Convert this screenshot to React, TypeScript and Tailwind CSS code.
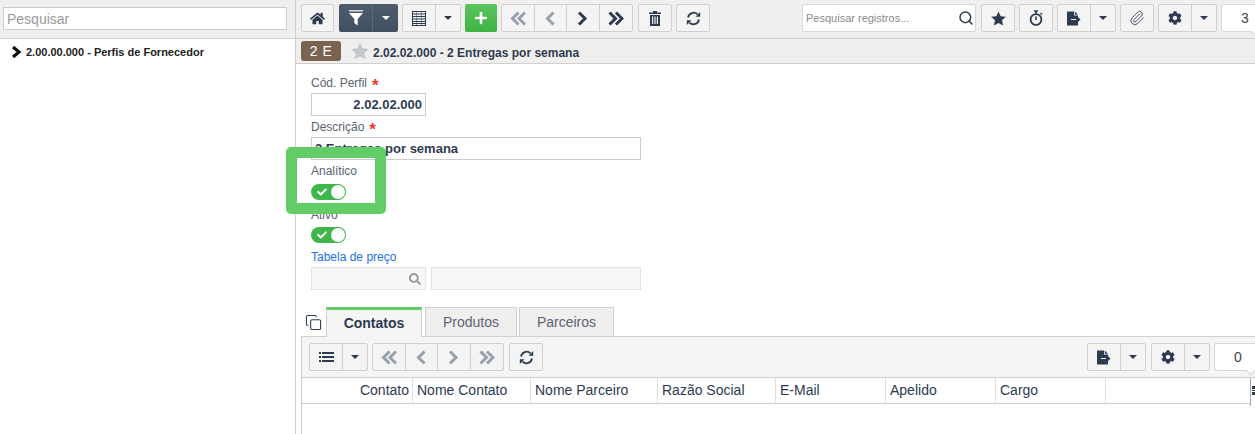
import { Copy, Paperclip, Search } from 'lucide-react';
import { FaCheck, FaCog, FaHome, FaPlus, FaSearch } from 'react-icons/fa';

const DARK = 'text-[#2d3b50]';

function Caret({ light = false }: { light?: boolean }) {
  return (
    <span
      className={`block w-0 h-0 border-x-[4px] border-x-transparent border-t-[4px] ${light ? 'border-t-white' : 'border-t-[#2d3b50]'}`}
    />
  );
}

function Chevron({ dir, double = false, muted = false }: { dir: 'left' | 'right'; double?: boolean; muted?: boolean }) {
  const color = muted ? '#98a1ab' : '#2d3b50';
  if (double) {
    const first = dir === 'left' ? 'M8.5 1.5 L2.5 7.5 L8.5 13.5' : 'M1.5 1.5 L7.5 7.5 L1.5 13.5';
    const second = dir === 'left' ? 'M15 1.5 L9 7.5 L15 13.5' : 'M8 1.5 L14 7.5 L8 13.5';
    return (
      <svg width="16" height="15" viewBox="0 0 16 15" fill="none" stroke={color} strokeWidth="3">
        <path d={first} />
        <path d={second} />
      </svg>
    );
  }
  const single = dir === 'left' ? 'M9.5 1.5 L3.5 7.5 L9.5 13.5' : 'M2 1.5 L8 7.5 L2 13.5';
  return (
    <svg width="12" height="15" viewBox="0 0 12 15" fill="none" stroke={color} strokeWidth="3">
      <path d={single} />
    </svg>
  );
}

function TableIcon() {
  return (
    <svg width="14" height="15" viewBox="0 0 14 15" fill="none">
      <path d="M4.5 1v13M9.5 1v13" stroke="#9aa3af" strokeWidth="1" />
      <rect x="0.5" y="0.5" width="13" height="14" stroke="#2d3b50" />
      <path d="M1 3h12M1 5.5h12M1 8h12M1 10.5h12M1 12.5h12" stroke="#2d3b50" strokeWidth="1" />
    </svg>
  );
}

function ListIcon() {
  return (
    <svg width="15" height="12" viewBox="0 0 15 12" fill="#2d3b50">
      <rect x="0" y="1" width="2" height="2" />
      <rect x="3" y="1" width="12" height="2" />
      <rect x="0" y="5" width="2" height="2" />
      <rect x="3" y="5" width="12" height="2" />
      <rect x="0" y="9" width="2" height="2" />
      <rect x="3" y="9" width="12" height="2" />
    </svg>
  );
}

function FilterIcon() {
  return (
    <svg width="16" height="16" viewBox="0 0 16 16" fill="#fff">
      <rect x="1" y="0" width="14" height="1.5" opacity="0.8" />
      <path d="M1 3h14L9.7 9v6.5L6.3 13V9z" />
    </svg>
  );
}

function TrashIcon() {
  return (
    <svg width="12" height="15" viewBox="0 0 12 15" fill="#2d3b50">
      <path d="M4 0h4v1.5h4V3H0V1.5h4z" />
      <path d="M1 4h10v11H1zM3 5.5V13h1.2V5.5zM5.4 5.5V13h1.2V5.5zM7.8 5.5V13H9V5.5z" fillRule="evenodd" />
    </svg>
  );
}

function RefreshIcon() {
  return (
    <svg width="15" height="15" viewBox="0 0 15 15" fill="#2d3b50">
      <path d="M2 6.5A5.6 5.6 0 0 1 11.5 3.4" fill="none" stroke="#2d3b50" strokeWidth="1.8" />
      <path d="M13 8.5A5.6 5.6 0 0 1 3.5 11.6" fill="none" stroke="#2d3b50" strokeWidth="1.8" />
      <path d="M9.5 5.7h4.7V1z" />
      <path d="M5.5 9.3H0.8V14z" />
    </svg>
  );
}

function StarIcon({ size = 15, color = '#2d3b50' }: { size?: number; color?: string }) {
  return (
    <svg width={size} height={size} viewBox="0 0 16 16" fill={color}>
      <path d="M8 0.5l2.3 5.1 5.5 0.6-4.1 3.7 1.2 5.5L8 12.7l-4.9 2.7 1.2-5.5L0.2 6.2l5.5-0.6z" />
    </svg>
  );
}

function StopwatchIcon() {
  return (
    <svg width="15" height="16" viewBox="0 0 15 16" fill="none" stroke="#2d3b50">
      <circle cx="7" cy="9.5" r="5.4" strokeWidth="1.8" />
      <path d="M5 1h4M7 1v3" strokeWidth="1.6" />
      <path d="M7 6.5v3.5" strokeWidth="1.6" />
      <path d="M11.5 3l1.6 1.6" strokeWidth="1.4" />
    </svg>
  );
}

function FileExportIcon() {
  return (
    <svg width="14" height="15" viewBox="0 0 14 15" fill="#2d3b50">
      <path d="M0 0.5h7v4h4v1.5L13.5 8.5 11 11v3.5H0z" />
      <path d="M7.8 0.5L11 3.7H7.8z" />
      <path d="M4 8h5v1H4z" fill="#f4f4f4" />
    </svg>
  );
}

function Btn({ children, className = '' }: { children: React.ReactNode; className?: string }) {
  return (
    <button
      type="button"
      className={`h-[28px] flex items-center justify-center border border-[#d0d0d0] rounded-[2px] bg-[#f4f4f4] ${DARK} ${className}`}
    >
      {children}
    </button>
  );
}

function SplitBtn({ children }: { children: React.ReactNode }) {
  return (
    <div className={`h-[28px] w-[59px] flex border border-[#d0d0d0] rounded-[2px] bg-[#f4f4f4] ${DARK}`}>
      <span className="w-[33px] flex items-center justify-center border-r border-[#d0d0d0]">{children}</span>
      <span className="flex-1 flex items-center justify-center">
        <Caret />
      </span>
    </div>
  );
}

function NavGroup({ active }: { active: boolean }) {
  const cell = 'flex items-center justify-center';
  return (
    <div className="h-[28px] w-[132px] grid grid-cols-4 border border-[#d0d0d0] rounded-[2px] bg-[#f4f4f4] divide-x divide-[#d0d0d0]">
      <span className={cell}>
        <Chevron dir="left" double muted />
      </span>
      <span className={cell}>
        <Chevron dir="left" muted />
      </span>
      <span className={cell}>
        <Chevron dir="right" muted={!active} />
      </span>
      <span className={cell}>
        <Chevron dir="right" double muted={!active} />
      </span>
    </div>
  );
}

function Counter({ value, width, tail }: { value: string; width: string; tail: string }) {
  return (
    <div className={`relative h-[28px] ${width} shrink-0 bg-white border border-r-0 border-[#d8d8d8] rounded-l-[3px] text-[14px] text-[#444] flex items-center pl-[19px]`}>
      {value}
      <span className={`absolute bottom-[-4px] ${tail} w-[7px] h-[7px] rotate-45 bg-white border-r border-b border-[#d0d0d0]`} />
    </div>
  );
}

function Toggle() {
  return (
    <div className="w-[35px] h-[16px] rounded-full bg-[#3fb64a] flex items-center justify-between pl-[6px] pr-[1px]">
      <FaCheck className="text-white" size={10} />
      <span className="w-[14px] h-[14px] rounded-full bg-white" />
    </div>
  );
}

function Req() {
  return <span className="text-[#e5392c] text-[17px] font-bold leading-[12px] ml-[5px] mt-[5px]">*</span>;
}

const columns = [
  { label: 'Nome Contato', width: 'w-[118px]' },
  { label: 'Nome Parceiro', width: 'w-[127px]' },
  { label: 'Razão Social', width: 'w-[118px]' },
  { label: 'E-Mail', width: 'w-[110px]' },
  { label: 'Apelido', width: 'w-[110px]' },
  { label: 'Cargo', width: 'w-[110px]' },
];

export default function App() {
  return (
    <div className="flex h-[434px] w-[1255px] overflow-hidden bg-white font-['Liberation_Sans',Arial,sans-serif] text-[12px]">
      <aside className="w-[296px] shrink-0 border-r border-[#cfcfcf]">
        <div className="h-[39px] bg-[#f0efee] border-b border-[#d0d0d0] pl-[3px] pt-[7px]">
          <input
            readOnly
            placeholder="Pesquisar"
            className="w-[284px] h-[23px] bg-white border border-[#cccccc] px-[3px] text-[14px] placeholder:text-[#9a9a9a] outline-none"
          />
        </div>
        <div className="flex items-center gap-[3px] pl-[11px] pt-[5px] text-[11px] font-bold text-[#222]">
          <svg width="12" height="14" viewBox="0 0 12 14" fill="none" stroke="#111" strokeWidth="3.2">
            <path d="M2 2 L8 7 L2 12" />
          </svg>
          <span>2.00.00.000 - Perfis de Fornecedor</span>
        </div>
      </aside>

      <main className="relative flex-1 min-w-0">
        <div className="h-[39px] bg-[#f0efee] border-b border-[#d0d0d0] flex items-start gap-[4px] pt-[4px] pl-[5px]">
          <Btn className="w-[33px]">
            <FaHome size={15} />
          </Btn>
          <div className="h-[28px] w-[59px] ml-[1px] flex rounded-[2px] bg-gradient-to-b from-[#4f5c6e] to-[#424f61]">
            <span className="w-[34px] flex items-center justify-center border-r border-[#5d6979]">
              <FilterIcon />
            </span>
            <span className="flex-1 flex items-center justify-center">
              <Caret light />
            </span>
          </div>
          <SplitBtn>
            <TableIcon />
          </SplitBtn>
          <button type="button" className="h-[28px] w-[32px] flex items-center justify-center rounded-[2px] bg-gradient-to-b from-[#58c65b] to-[#3db244] text-white">
            <FaPlus size={14} />
          </button>
          <NavGroup active />
          <Btn className="w-[34px] ml-[1px]">
            <TrashIcon />
          </Btn>
          <Btn className="w-[34px]">
            <RefreshIcon />
          </Btn>
          <div className="ml-auto flex items-start gap-[4px]">
            <div className="w-[174px] h-[28px] mr-[1px] bg-white border border-[#d8d8d8] rounded-[2px] flex items-center justify-between pl-[3px] pr-[1px] text-[11px] text-[#8a8a8a]">
              <span>Pesquisar registros...</span>
              <Search size={16} strokeWidth={2.2} className={DARK} />
            </div>
            <Btn className="w-[34px]">
              <StarIcon />
            </Btn>
            <Btn className="w-[34px]">
              <StopwatchIcon />
            </Btn>
            <SplitBtn>
              <FileExportIcon />
            </SplitBtn>
            <Btn className="w-[34px]">
              <Paperclip size={16} strokeWidth={1.3} />
            </Btn>
            <SplitBtn>
              <FaCog size={14} />
            </SplitBtn>
            <Counter value="3" width="w-[34px]" tail="right-[-4px]" />
          </div>
        </div>

        <div className="h-[25px] bg-[#f0efee] border-b border-[#d0d0d0] flex items-start pl-[5px] pt-[2px]">
          <span className="w-[40px] h-[20px] flex items-center justify-center rounded-[3px] bg-[#7a6450] text-white text-[14px] tracking-[0.5px]">
            2 E
          </span>
          <span className="ml-[10px] mt-[1px]">
            <StarIcon size={18} color="#c4c8ce" />
          </span>
          <span className={`ml-[4px] mt-[3px] font-bold ${DARK} text-[12px]`}>2.02.02.000 - 2 Entregas por semana</span>
        </div>

        <div className="pl-[15px] text-[12px] text-[#5a6472]">
          <label className="flex items-center h-[16px] mt-[11px]">
            Cód. Perfil <Req />
          </label>
          <div className={`w-[115px] h-[23px] mt-[2px] border border-[#cccccc] flex items-center justify-end pr-[3px] text-[13px] font-bold ${DARK}`}>
            2.02.02.000
          </div>
          <label className="flex items-center h-[16px] mt-[3px]">
            Descrição <Req />
          </label>
          <div className={`w-[330px] h-[23px] mt-[2px] border border-[#cccccc] flex items-center pl-[3px] text-[13px] font-bold ${DARK}`}>
            2 Entregas por semana
          </div>
          <label className="block h-[16px] mt-[3px] leading-[16px]">Analítico</label>
          <div className="mt-[5px]">
            <Toggle />
          </div>
          <label className="block h-[16px] mt-[7px] leading-[16px]">Ativo</label>
          <div className="mt-[4px]">
            <Toggle />
          </div>
          <label className="block h-[16px] mt-[6px] leading-[16px] text-[#1a73e8]">Tabela de preço</label>
          <div className="flex gap-[5px] mt-[2px]">
            <div className="w-[115px] h-[23px] bg-[#f7f7f7] border border-[#e2e2e2] flex items-center justify-end pr-[4px] text-[#9a9a9a]">
              <FaSearch size={12} />
            </div>
            <div className="w-[210px] h-[23px] bg-[#f7f7f7] border border-[#e2e2e2]" />
          </div>
        </div>

        <div className="flex items-end h-[29px] mt-[17px] pl-[9px]">
          <Copy size={17} strokeWidth={1.5} className={`${DARK} mb-[5px] mr-[4px]`} />
          <div className={`w-[96px] h-[30px] bg-[#f5f5f5] border-t-[3px] border-t-[#62cc66] border-x border-x-[#d0d0d0] flex items-center justify-center text-[14px] font-bold ${DARK} relative z-10 -mb-px`}>
            Contatos
          </div>
          <div className="w-[92px] h-[29px] ml-[3px] bg-[#f0efee] border border-[#d0d0d0] border-b-0 flex items-center justify-center text-[14px] text-[#5a6472]">
            Produtos
          </div>
          <div className="w-[95px] h-[29px] ml-[2px] bg-[#f0efee] border border-[#d0d0d0] border-b-0 flex items-center justify-center text-[14px] text-[#5a6472]">
            Parceiros
          </div>
        </div>

        <div className="ml-[5px] border-l border-[#d0d0d0] h-[98px]">
          <div className="h-[41px] bg-[#f5f5f5] border-t border-[#d0d0d0] flex items-start gap-[4px] pt-[6px] pl-[7px]">
            <SplitBtn>
              <ListIcon />
            </SplitBtn>
            <NavGroup active={false} />
            <Btn className="w-[34px] ml-[1px]">
              <RefreshIcon />
            </Btn>
            <div className="ml-auto flex items-start gap-[5px]">
              <SplitBtn>
                <FileExportIcon />
              </SplitBtn>
              <SplitBtn>
                <FaCog size={14} />
              </SplitBtn>
              <Counter value="0" width="w-[41px] -ml-[1px]" tail="right-[1px]" />
            </div>
          </div>
          <div className="relative border-t border-[#cccccc]">
            <div className="flex h-[26px] border-b border-[#cccccc] text-[14px] w-[948px]">
              <div className={`w-[111px] flex items-center justify-end pr-[3px] border-r border-[#e0e0e0] ${DARK}`}>Contato</div>
              {columns.map((col) => (
                <div key={col.label} className={`${col.width} flex items-center pl-[4px] border-r border-[#e0e0e0] ${DARK}`}>
                  {col.label}
                </div>
              ))}
              <div className="flex-1" />
            </div>
            {/* column resize line and the small dots beside it */}
            <div className="absolute left-[948px] top-0 h-[28px] w-px bg-[#a8a8a8]" />
            <div className="absolute left-[950px] top-[8px] w-[3px] h-[9px] border-y-[3px] border-[#2d3b50] flex items-center">
              <span className="block w-full h-px bg-[#2d3b50]" />
            </div>
          </div>
        </div>

        {/* green highlight drawn over the form */}
        <div className="absolute left-[-10px] top-[147px] w-[100px] h-[67px] border-[11px] border-[#62cc66] rounded-[5px]" />
      </main>
    </div>
  );
}
